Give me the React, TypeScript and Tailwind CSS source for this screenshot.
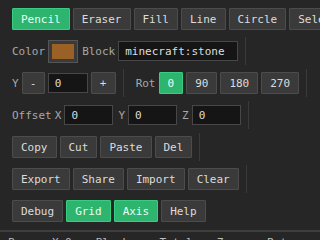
import { FC, ReactNode } from "react";

const btn =
  "h-[22px] px-2 border text-[11px] leading-none flex items-center rounded-[1px]";
const plain = "bg-[#3a3a3a] border-[#4c4c4c] text-[#dcdcdc]";
const active = "bg-[#2db46e] border-[#3ccb80] text-[#eafff2]";

const Btn: FC<{ label: string; on?: boolean; w?: string }> = ({ label, on, w }) => (
  <button className={`${btn} ${on ? active : plain} ${w ?? ""} justify-center shrink-0`}>{label}</button>
);

const Sep = () => <div className="w-px h-7 bg-[#3a3a3a] ml-[4px] shrink-0" />;

const Label: FC<{ children: ReactNode; cls?: string }> = ({ children, cls }) => (
  <span className={`text-[11px] text-[#a8a8a8] leading-none ${cls ?? ""}`}>{children}</span>
);

const Field: FC<{ value: string; w: string }> = ({ value, w }) => (
  <div
    className={`${w} h-[20px] bg-[#151515] border border-[#474747] text-[#dedede] text-[11px] leading-none flex items-center px-[6px] shrink-0`}
  >
    {value}
  </div>
);

const Row: FC<{ children: ReactNode }> = ({ children }) => (
  <div className="flex items-center gap-[3px] h-7 whitespace-nowrap">{children}</div>
);

const App: FC = () => {
  return (
    <div
      className="w-[320px] h-[240px] overflow-hidden bg-[#262626] text-[#dcdcdc]"
      style={{ fontFamily: '"DejaVu Sans Mono", "Liberation Mono", monospace' }}
    >
      <div className="flex flex-col gap-1 pt-[5px] pl-3">
        <Row>
          <Btn label="Pencil" on />
          <Btn label="Eraser" />
          <Btn label="Fill" />
          <Btn label="Line" />
          <Btn label="Circle" />
          <Btn label="Select" />
        </Row>
        <Row>
          <Label>Color</Label>
          <div className="w-[30px] h-[23px] bg-[#3a3a3a] border border-[#555] p-[3px] shrink-0">
            <div className="w-full h-full bg-[#9a6127]" />
          </div>
          <Label cls="ml-[1px]">Block</Label>
          <Field value="minecraft:stone" w="w-[120px]" />
          <Sep />
        </Row>
        <Row>
          <Label>Y</Label>
          <Btn label="-" w="w-[23px]" />
          <Field value="0" w="w-[40px]" />
          <Btn label="+" w="w-[25px]" />
          <Sep />
          <Label cls="ml-[9px]">Rot</Label>
          <Btn label="0" on />
          <Btn label="90" />
          <Btn label="180" />
          <Btn label="270" />
          <Sep />
        </Row>
        <Row>
          <Label>Offset</Label>
          <Label>X</Label>
          <Field value="0" w="w-[49px]" />
          <Label cls="ml-[2px]">Y</Label>
          <Field value="0" w="w-[49px]" />
          <Label cls="ml-[2px]">Z</Label>
          <Field value="0" w="w-[49px]" />
          <Sep />
        </Row>
        <Row>
          <Btn label="Copy" />
          <Btn label="Cut" />
          <Btn label="Paste" />
          <Btn label="Del" />
          <Sep />
        </Row>
        <Row>
          <Btn label="Export" />
          <Btn label="Share" />
          <Btn label="Import" />
          <Btn label="Clear" />
          <Sep />
        </Row>
        <Row>
          <Btn label="Debug" />
          <Btn label="Grid" on />
          <Btn label="Axis" on />
          <Btn label="Help" />
        </Row>
      </div>
      <div className="mt-[5px] border-t-2 border-[#3e3e3e] flex gap-6 px-2 pt-[3px] text-[11px] text-[#bdbdbd] whitespace-nowrap">
        <span>Pos</span>
        <span>X:0</span>
        <span>Blocks</span>
        <span>Total</span>
        <span>Zoom</span>
        <span>Rot</span>
      </div>
    </div>
  );
};

export default App;
